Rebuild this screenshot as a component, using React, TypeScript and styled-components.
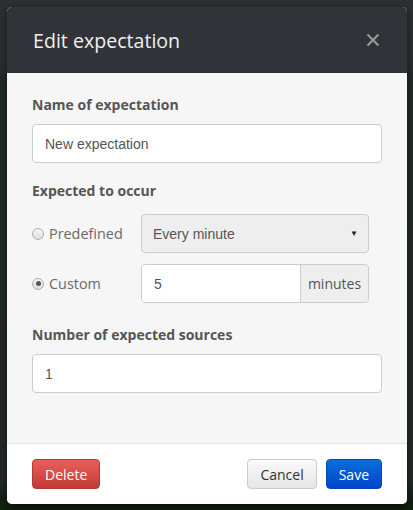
import React, { useState } from 'react'
import styled, { createGlobalStyle } from 'styled-components'

const GlobalStyle = createGlobalStyle`
html, body {
margin: 0;
padding: 0;
background: #252b2b;
}
* {
box-sizing: border-box;
}
`

const Backdrop = styled.div`
width: 413px;
height: 510px;
padding: 7px;
background: linear-gradient(180deg, #2c3032 0px, #2a2e30 70px, #23292a 75px, #24292a 480px, #13200f 504px);
`

const Modal = styled.div`
width: 400px;
height: 497px;
display: flex;
flex-direction: column;
border-radius: 5px;
overflow: hidden;
box-shadow: 0 3px 9px rgba(0, 0, 0, 0.5);
background: #fff;
`

const Header = styled.div`
height: 66px;
flex: none;
display: flex;
align-items: center;
justify-content: space-between;
padding: 0 27px 0 26px;
background: #303338;
`

const Title = styled.h4`
margin: 0;
font-family: "Open Sans", sans-serif;
font-size: 19.6px;
font-weight: 400;
color: #f0f0f0;
`

const Close = styled.button`
width: 14px;
height: 14px;
padding: 0;
border: 0;
background: none;
display: flex;
`

const Body = styled.div`
flex: 1;
background: #f6f6f6;
border-bottom: 1px solid #e3e3e3;
padding: 22px 25px 0 25px;
`

const Label = styled.div<{ mt?: number }>`
margin-top: ${({ mt }) => mt ?? 0}px;
font-family: "Open Sans", sans-serif;
font-size: 14px;
font-weight: 700;
color: #555;
line-height: 20px;
`

const TextInput = styled.div`
margin-top: 9px;
width: 100%;
height: 39px;
display: flex;
align-items: center;
padding: 0 12px;
background: #fff;
border: 1px solid #ccc;
border-radius: 4px;
font-family: "Liberation Sans", Arial, sans-serif;
font-size: 14px;
color: #555;
`

const Grid = styled.div`
margin-top: 13px;
display: grid;
grid-template-columns: 109px 228px;
row-gap: 11px;
align-items: center;
`

const RadioLabel = styled.label`
display: flex;
align-items: center;
gap: 5px;
font-family: "Open Sans", sans-serif;
font-size: 14.4px;
color: #6a6a6a;
cursor: pointer;
`

const RadioDot = styled.span<{ on?: boolean }>`
width: 12px;
height: 12px;
border-radius: 50%;
border: 1px solid #b0b0b0;
background: linear-gradient(180deg, #f6f6f6, #dedede);
display: flex;
align-items: center;
justify-content: center;
&::after {
content: '';
width: 5px;
height: 5px;
border-radius: 50%;
background: ${({ on }) => (on ? '#555' : 'transparent')};
}
`

const Select = styled.div`
height: 39px;
display: flex;
align-items: center;
justify-content: space-between;
padding: 0 10px 0 11px;
background: #eee;
border: 1px solid #ccc;
border-radius: 4px;
font-family: "Liberation Sans", Arial, sans-serif;
font-size: 14px;
color: #555;
`

const Arrow = styled.span`
font-size: 8px;
color: #222;
`

const Group = styled.div`
height: 39px;
display: flex;
border: 1px solid #ccc;
border-radius: 4px;
overflow: hidden;
`

const GroupInput = styled.div`
flex: 1;
display: flex;
align-items: center;
padding: 0 12px;
background: #fff;
font-family: "Liberation Sans", Arial, sans-serif;
font-size: 14px;
color: #555;
`

const Addon = styled.div`
width: 68px;
display: flex;
align-items: center;
justify-content: center;
background: #eee;
border-left: 1px solid #ccc;
font-family: "Open Sans", sans-serif;
font-size: 14px;
color: #555;
`

const Footer = styled.div`
height: 60px;
flex: none;
display: flex;
align-items: center;
padding: 0 25px 0 25px;
background: #fff;
gap: 9px;
`

const Button = styled.button<{ kind: 'danger' | 'default' | 'primary' }>`
height: 30px;
padding: 0 12px;
border-radius: 4px;
font-family: "Open Sans", sans-serif;
font-size: 14px;
cursor: pointer;
color: ${({ kind }) => (kind === 'default' ? '#333' : '#fff')};
border: 1px solid ${({ kind }) => (kind === 'danger' ? '#b33a36' : kind === 'primary' ? '#0048b8' : '#ccc')};
background: ${({ kind }) =>
kind === 'danger'
? 'linear-gradient(180deg, #ea5f5c, #c13a36)'
: kind === 'primary'
? 'linear-gradient(180deg, #0a6ed8, #0044cc)'
: 'linear-gradient(180deg, #fafafa, #e6e6e6)'};
`

const Spacer = styled.div`
flex: 1;
`

const App: React.FC = () => {
const [mode, setMode] = useState<'predefined' | 'custom'>('custom')

return (
<>
<GlobalStyle />
<Backdrop>
<Modal>
<Header>
<Title>Edit expectation</Title>
<Close aria-label="Close">
<svg width="14" height="14" viewBox="0 0 14 14">
<path d="M1.5 1.5 L12.5 12.5 M12.5 1.5 L1.5 12.5" stroke="#9a9b9d" strokeWidth="2" />
</svg>
</Close>
</Header>
<Body>
<Label>Name of expectation</Label>
<TextInput>New expectation</TextInput>
<Label mt={18}>Expected to occur</Label>
<Grid>
<RadioLabel onClick={() => setMode('predefined')}>
<RadioDot on={mode === 'predefined'} />
Predefined
</RadioLabel>
<Select>
Every minute
<Arrow>▼</Arrow>
</Select>
<RadioLabel onClick={() => setMode('custom')}>
<RadioDot on={mode === 'custom'} />
Custom
</RadioLabel>
<Group>
<GroupInput>5</GroupInput>
<Addon>minutes</Addon>
</Group>
</Grid>
<Label mt={22}>Number of expected sources</Label>
<TextInput>1</TextInput>
</Body>
<Footer>
<Button kind="danger">Delete</Button>
<Spacer />
<Button kind="default">Cancel</Button>
<Button kind="primary">Save</Button>
</Footer>
</Modal>
</Backdrop>
</>
)
}

export default App
